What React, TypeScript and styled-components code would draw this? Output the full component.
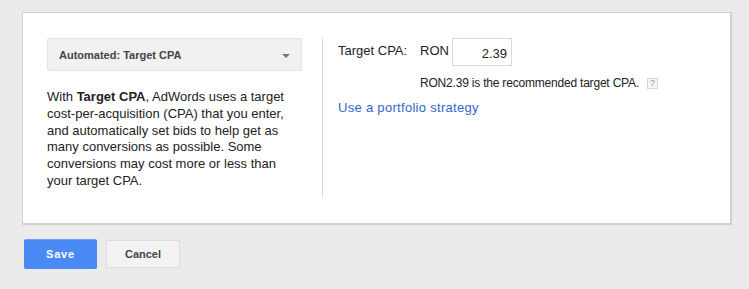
import styled, { createGlobalStyle } from "styled-components";

const GlobalStyle = createGlobalStyle`
  html, body {
    margin: 0;
    padding: 0;
    background: #ebebeb;
    overflow: hidden;
  }
  body {
    font-family: "Liberation Sans", Arial, sans-serif;
    color: #222;
  }
`;

const Page = styled.div`
  width: 749px;
  height: 289px;
  padding: 0 17px 0 22px;
  box-sizing: border-box;
`;

// Section title sits mostly above the visible area; only its descenders peek in.
const Heading = styled.h2`
  margin: -17px 0 13px 2px;
  font-size: 16px;
  line-height: 16px;
  font-weight: bold;
  color: #222;
`;

const Panel = styled.div`
  background: #fff;
  border: 1px solid #d0d0d0;
  border-bottom-width: 2px;
  border-right-width: 2px;
  padding: 25px 24px 25px 24px;
  display: flex;
  width: 710px;
  box-sizing: border-box;
`;

const LeftColumn = styled.div`
  width: 255px;
  padding-bottom: 8px;
  margin-right: 20px;
`;

const Dropdown = styled.div`
  height: 33px;
  box-sizing: border-box;
  border: 1px solid #e3e3e3;
  border-radius: 2px;
  background: #f1f1f1;
  display: flex;
  align-items: center;
  justify-content: space-between;
  padding: 0 11px 0 11px;
  font-size: 11px;
  font-weight: bold;
  color: #444;
`;

const Caret = styled.span`
  width: 0;
  height: 0;
  border-left: 4px solid transparent;
  border-right: 4px solid transparent;
  border-top: 4px solid #777;
  margin-top: 2px;
`;

const Description = styled.p`
  margin: 18px 0 0 0;
  font-size: 13px;
  line-height: 16.8px;
  color: #222;
  b {
    font-weight: bold;
  }
`;

const RightColumn = styled.div`
  flex: 1;
  border-left: 1px solid #dcdcdc;
  padding-left: 15px;
`;

const CpaRow = styled.div`
  display: flex;
  align-items: flex-start;
  font-size: 13px;
`;

const Label = styled.span<{ width?: number }>`
  display: inline-block;
  width: ${(p) => (p.width ? `${p.width}px` : "auto")};
  padding-top: 5px;
  line-height: 16px;
`;

const AmountInput = styled.div`
  width: 60px;
  height: 28px;
  box-sizing: border-box;
  border: 1px solid #d9d9d9;
  text-align: right;
  padding: 7px 4px 0 0;
  font-size: 13px;
  line-height: 16px;
  color: #222;
`;

const Hint = styled.div`
  margin: 9px 0 0 82px;
  display: flex;
  align-items: center;
  font-size: 12px;
  line-height: 16px;
  color: #222;
  letter-spacing: -0.2px;
`;

const HelpIcon = styled.span`
  margin-left: 8px;
  width: 11px;
  height: 11px;
  box-sizing: border-box;
  border: 1px solid #d6d6d6;
  background: #f6f6f6;
  color: #999;
  font-size: 9px;
  line-height: 9px;
  text-align: center;
  letter-spacing: 0;
`;

const PortfolioLink = styled.a`
  display: block;
  margin-top: 9px;
  font-size: 13px;
  line-height: 16px;
  color: #3366cc;
  text-decoration: none;
  letter-spacing: 0.3px;
`;

const ButtonRow = styled.div`
  display: flex;
  gap: 9px;
  margin: 14px 0 0 2px;
`;

const Button = styled.button<{ primary?: boolean }>`
  width: ${(p) => (p.primary ? 73 : 74)}px;
  height: ${(p) => (p.primary ? 30 : 28)}px;
  margin-top: ${(p) => (p.primary ? 0 : 1)}px;
  box-sizing: border-box;
  border-radius: 2px;
  font-family: "Liberation Sans", Arial, sans-serif;
  font-size: 11px;
  font-weight: bold;
  padding: 0;
  border: 1px solid ${(p) => (p.primary ? "#4a8af4" : "#dcdcdc")};
  border-top-color: ${(p) => (p.primary ? "#6fa2f7" : "#dcdcdc")};
  background: ${(p) => (p.primary ? "#4a8af4" : "#f3f3f3")};
  color: ${(p) => (p.primary ? "#fff" : "#444")};
  letter-spacing: ${(p) => (p.primary ? "0.8px" : "0")};
`;

export default function App() {
  return (
    <Page>
      <GlobalStyle />
      <Heading>Bid strategy</Heading>
      <Panel>
        <LeftColumn>
          <Dropdown>
            <span>Automated: Target CPA</span>
            <Caret />
          </Dropdown>
          <Description>
            With <b>Target CPA</b>, AdWords uses a target cost-per-acquisition
            (CPA) that you enter, and automatically set bids to help get as
            many conversions as possible. Some conversions may cost more or
            less than your target CPA.
          </Description>
        </LeftColumn>
        <RightColumn>
          <CpaRow>
            <Label width={82}>Target CPA:</Label>
            <Label width={32}>RON</Label>
            <AmountInput>2.39</AmountInput>
          </CpaRow>
          <Hint>
            RON2.39 is the recommended target CPA.
            <HelpIcon>?</HelpIcon>
          </Hint>
          <PortfolioLink href="#">Use a portfolio strategy</PortfolioLink>
        </RightColumn>
      </Panel>
      <ButtonRow>
        <Button primary>Save</Button>
        <Button>Cancel</Button>
      </ButtonRow>
    </Page>
  );
}
